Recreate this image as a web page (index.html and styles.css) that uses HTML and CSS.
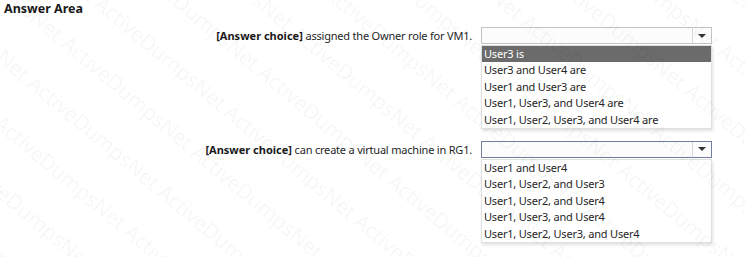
FILE: index.html
```html
<!DOCTYPE html>
<html lang="en">
<head>
    <meta charset="UTF-8">
    <title>Answer Area</title>
    <link rel="stylesheet" href="styles.css">
</head>
<body>
    <div class="area">
        <h1>Answer Area</h1>
        <div class="question q1">
            <div class="label"><strong>[Answer choice]</strong> assigned the Owner role for VM1.</div>
            <div class="pick">
                <div class="box"><span class="arrow"></span></div>
                <ul class="list">
                    <li class="active">User3 is</li>
                    <li>User3 and User4 are</li>
                    <li>User1 and User3 are</li>
                    <li>User1, User3, and User4 are</li>
                    <li>User1, User2, User3, and User4 are</li>
                </ul>
            </div>
        </div>
        <div class="question q2">
            <div class="label"><strong>[Answer choice]</strong> can create a virtual machine in RG1.</div>
            <div class="pick">
                <div class="box focus"><span class="arrow"></span></div>
                <ul class="list">
                    <li>User1 and User4</li>
                    <li>User1, User2, and User3</li>
                    <li>User1, User2, and User4</li>
                    <li>User1, User3, and User4</li>
                    <li>User1, User2, User3, and User4</li>
                </ul>
            </div>
        </div>
    </div>
    <div class="mark" aria-hidden="true">
        <div class="mark-inner" id="mark"></div>
    </div>
    <script>
        // marca de agua repetida
        const mark = document.getElementById('mark');
        let html = '';
        for (let i = 0; i < 24; i++) {
            html += '<div>' + 'ActiveDumpsNet '.repeat(10) + '</div>';
        }
        mark.innerHTML = html;
    </script>
</body>
</html>
```

FILE: styles.css
```css
body {
    margin: 0;
    background: #ffffff;
    font-family: "Noto Sans", "Open Sans", sans-serif;
    font-size: 11px;
    letter-spacing: -0.2px;
    color: #262626;
    width: 745px;
    height: 257px;
    overflow: hidden;
    position: relative;
}
.area {
    padding: 2px 0 0 4px;
}
h1 {
    font-size: 12.5px;
    font-weight: bold;
    letter-spacing: 0;
    margin: 0;
    line-height: 14px;
    color: #1a1a1a;
}
.question {
    display: grid;
    grid-template-columns: 468px 231px;
    column-gap: 9px;
    align-items: start;
}
.q1 {
    margin-top: 11px;
}
.q2 {
    margin-top: 12px;
}
.label {
    text-align: right;
    line-height: 17px;
    white-space: nowrap;
}
.label strong {
    letter-spacing: 0;
    color: #1a1a1a;
}
.box {
    height: 15px;
    border: 1px solid #c4c4c4;
    background: #fcfcfc;
    display: flex;
    justify-content: flex-end;
}
.box.focus {
    border-color: #6f7f9c;
}
.arrow {
    width: 18px;
    border-left: 1px solid #d8d8d8;
    display: flex;
    align-items: center;
    justify-content: center;
}
.arrow::after {
    content: "";
    border-left: 4px solid transparent;
    border-right: 4px solid transparent;
    border-top: 4px solid #333;
}
.list {
    list-style: none;
    margin: 1px 0 0 0;
    padding: 0;
    width: 229px;
    border: 1px solid #e0e0e0;
    box-shadow: 1px 2px 3px rgba(0, 0, 0, 0.12);
    background: #fff;
}
.list li {
    height: 16.4px;
    line-height: 16px;
    padding-left: 2px;
    white-space: nowrap;
}
.list li.active {
    background: #6b6b6b;
    color: #fff;
}
.mark {
    position: absolute;
    inset: 0;
    overflow: hidden;
    pointer-events: none;
}
.mark-inner {
    position: absolute;
    width: 1600px;
    height: 1248px;
    left: -428px;
    top: -496px;
    transform: rotate(40deg);
    font-family: "Open Sans", sans-serif;
    font-size: 21px;
    letter-spacing: 0;
    line-height: 52px;
    color: rgba(0, 0, 0, 0.055);
    white-space: nowrap;
    overflow: hidden;
}
```
